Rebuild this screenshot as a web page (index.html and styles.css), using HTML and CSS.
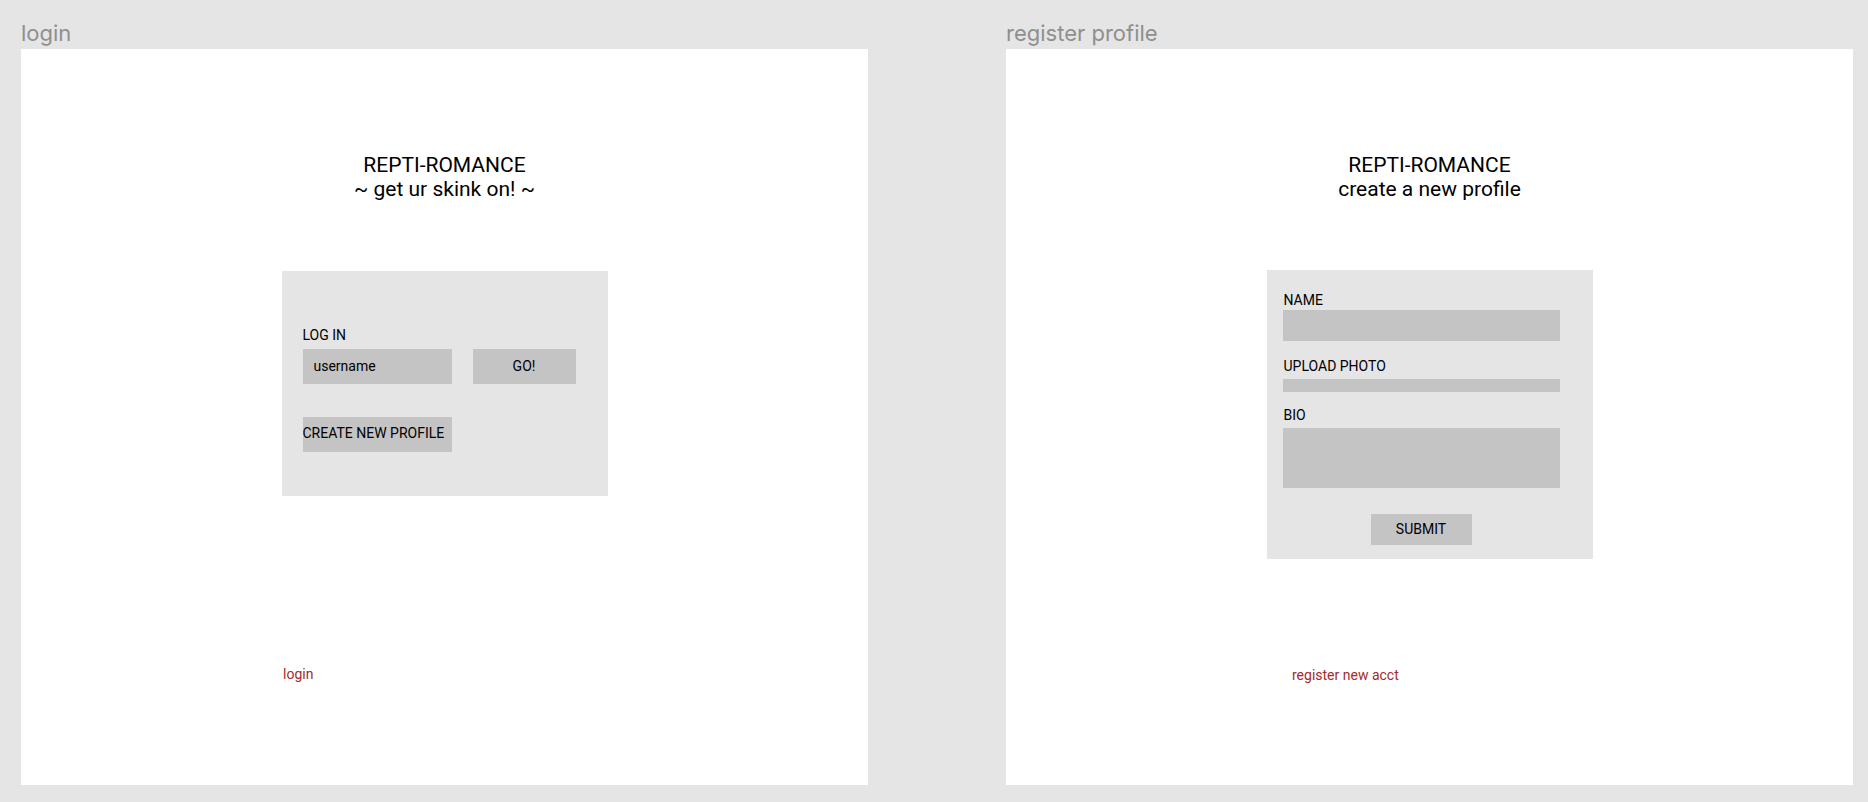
FILE: index.html
```html
<!DOCTYPE html>
<html lang="en">
<head>
<meta charset="utf-8">
<title>Repti-Romance wireframes</title>
<link rel="stylesheet" href="styles.css">
</head>
<body>
<div class="canvas">
  <section class="board">
    <div class="board-label">login</div>
    <div class="frame">
      <div class="title">REPTI-ROMANCE<br>~ get ur skink on! ~</div>
      <div class="panel login-panel">
        <div class="section-label">LOG IN</div>
        <div class="login-row">
          <div class="field username">username</div>
          <button class="btn go">GO!</button>
        </div>
        <button class="btn create">CREATE NEW PROFILE</button>
      </div>
      <div class="frame-link login-link">login</div>
    </div>
  </section>
  <section class="board">
    <div class="board-label">register profile</div>
    <div class="frame">
      <div class="title">REPTI-ROMANCE<br>create a new profile</div>
      <div class="panel register-panel">
        <div class="section-label reg-label">NAME</div>
        <div class="field name-field"></div>
        <div class="section-label reg-label upload-label">UPLOAD PHOTO</div>
        <div class="field photo-field"></div>
        <div class="section-label reg-label bio-label">BIO</div>
        <div class="field bio-field"></div>
        <button class="btn submit">SUBMIT</button>
      </div>
      <div class="frame-link register-link">register new acct</div>
    </div>
  </section>
</div>
</body>
</html>
```

FILE: styles.css
```css
* { box-sizing: border-box; }

body {
  margin: 0;
  background: #e5e5e5;
  font-family: Roboto, "Liberation Sans", sans-serif;
  color: #000;
}

.canvas {
  display: flex;
  gap: 138px;
  padding: 23px 0 0 21px;
}

.board {
  width: 847px;
  display: flex;
  flex-direction: column;
}

.board-label {
  font-family: Inter, "Noto Sans", sans-serif;
  font-size: 22px;
  line-height: 20px;
  height: 20px;
  color: #8f8f8f;
  margin-bottom: 6px;
  white-space: nowrap;
}

.frame {
  background: #fff;
  height: 736px;
  display: flex;
  flex-direction: column;
  align-items: center;
  padding-bottom: 103px;
}

.title {
  margin-top: 103.5px;
  text-align: center;
  font-size: 21px;
  line-height: 24.6px;
}

.panel {
  width: 326px;
  background: #e5e5e5;
  display: flex;
  flex-direction: column;
}

.section-label {
  font-size: 14px;
  line-height: 16px;
}

.field {
  background: #c4c4c4;
}

.btn {
  border: 0;
  margin: 0;
  background: #c4c4c4;
  font-family: Roboto, "Liberation Sans", sans-serif;
  font-size: 14px;
  line-height: 16px;
  color: #000;
  display: flex;
  align-items: center;
  justify-content: center;
  padding: 0;
}

/* login panel */
.login-panel {
  margin-top: 69.3px;
  height: 225px;
  padding: 56px 21px 0;
}

.login-row {
  display: flex;
  gap: 21px;
  margin-top: 6px;
}

.username {
  width: 149px;
  height: 35px;
  padding-left: 11px;
  display: flex;
  align-items: center;
  font-size: 14px;
}

.go {
  width: 103px;
  height: 35px;
}

.create {
  width: 149px;
  height: 35px;
  margin-top: 33px;
  padding-bottom: 2px;
  justify-content: flex-start;
  white-space: nowrap;
}

/* register panel */
.register-panel {
  margin-top: 68.3px;
  height: 289px;
  padding: 22px 33px 0 16px;
}

.reg-label {
  padding-left: 1px;
}

.name-field {
  height: 31px;
  margin-top: 2px;
}

.upload-label {
  margin-top: 17px;
}

.photo-field {
  height: 13px;
  margin-top: 5px;
}

.bio-label {
  margin-top: 15px;
}

.bio-field {
  height: 60px;
  margin-top: 5px;
}

.submit {
  width: 101px;
  height: 31px;
  margin-top: 26px;
  align-self: center;
}

/* bottom links */
.frame-link {
  margin-top: auto;
  align-self: flex-start;
  font-size: 14px;
  line-height: 16px;
  color: #a52a2a;
}

.login-link {
  margin-left: 262px;
}

.register-link {
  margin-left: 286px;
  position: relative;
  top: 1px;
}
```
